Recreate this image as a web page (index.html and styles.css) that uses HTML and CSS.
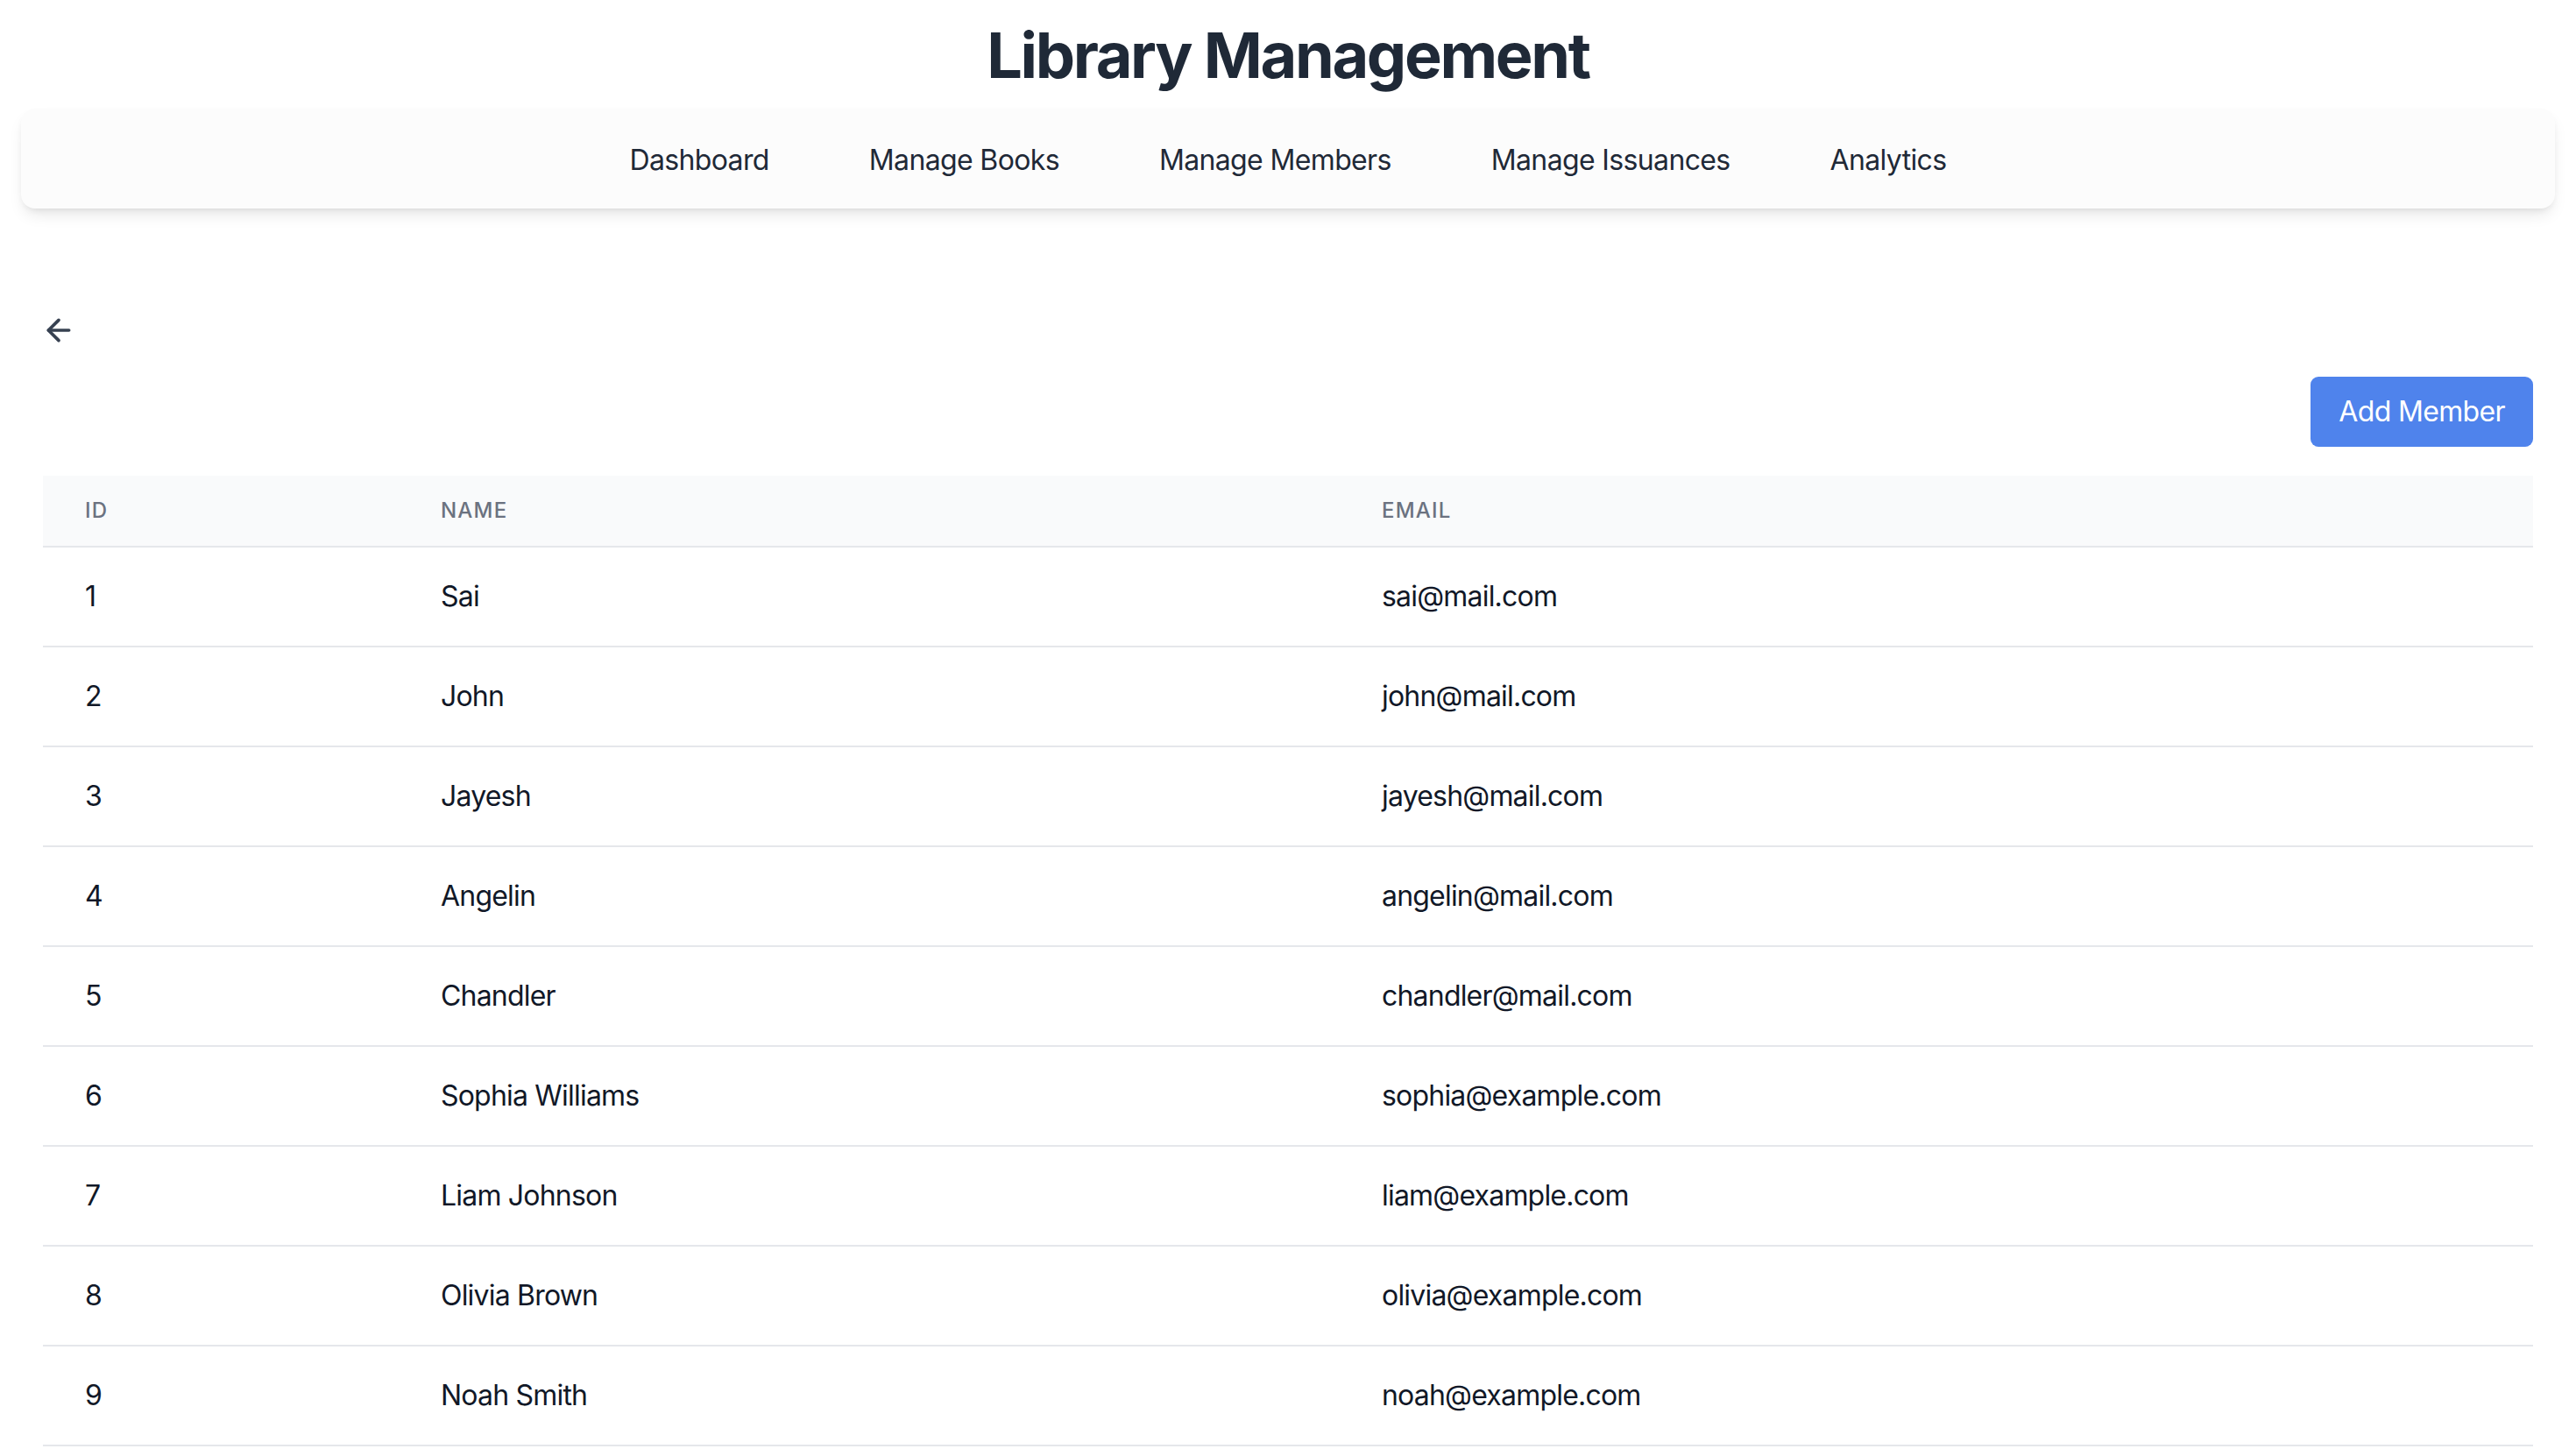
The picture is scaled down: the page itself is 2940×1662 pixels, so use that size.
FILE: index.html
```html
<!DOCTYPE html>
<html lang="en">
<head>
<meta charset="utf-8">
<title>Library Management</title>
<link rel="stylesheet" href="styles.css">
</head>
<body>
<header class="site-header">
  <h1 class="title">Library Management</h1>
  <nav class="nav">
    <a class="nav-link" href="#">Dashboard</a>
    <a class="nav-link" href="#">Manage Books</a>
    <a class="nav-link" href="#">Manage Members</a>
    <a class="nav-link" href="#">Manage Issuances</a>
    <a class="nav-link" href="#">Analytics</a>
  </nav>
</header>
<main class="content">
  <button class="back-btn" type="button" aria-label="Back">
    <svg class="back-icon" viewBox="0 0 24 24" fill="none" stroke="currentColor" stroke-width="2.2" stroke-linecap="round" stroke-linejoin="round">
      <path d="M19 12H5"/>
      <path d="M12 19l-7-7 7-7"/>
    </svg>
  </button>
  <div class="toolbar">
    <button class="add-btn" type="button">Add Member</button>
  </div>
  <table class="members">
    <colgroup>
      <col class="col-id">
      <col class="col-name">
      <col class="col-email">
    </colgroup>
    <thead>
      <tr><th>ID</th><th>Name</th><th>Email</th></tr>
    </thead>
    <tbody>
      <tr><td>1</td><td>Sai</td><td>sai@mail.com</td></tr>
      <tr><td>2</td><td>John</td><td>john@mail.com</td></tr>
      <tr><td>3</td><td>Jayesh</td><td>jayesh@mail.com</td></tr>
      <tr><td>4</td><td>Angelin</td><td>angelin@mail.com</td></tr>
      <tr><td>5</td><td>Chandler</td><td>chandler@mail.com</td></tr>
      <tr><td>6</td><td>Sophia Williams</td><td>sophia@example.com</td></tr>
      <tr><td>7</td><td>Liam Johnson</td><td>liam@example.com</td></tr>
      <tr><td>8</td><td>Olivia Brown</td><td>olivia@example.com</td></tr>
      <tr><td>9</td><td>Noah Smith</td><td>noah@example.com</td></tr>
    </tbody>
  </table>
</main>
</body>
</html>
```
FILE: styles.css
```css
* { box-sizing: border-box; }

html, body {
  margin: 0;
  padding: 0;
  background: #ffffff;
}

body {
  font-family: Inter, "Noto Sans", "Liberation Sans", sans-serif;
  color: #111827;
}

.site-header {
  padding-top: 23px;
}

.title {
  margin: 0;
  text-align: center;
  font-size: 72px;
  line-height: 80px;
  font-weight: 700;
  letter-spacing: -0.033em;
  color: #1f2937;
}

.nav {
  margin: 21px 24px 0;
  height: 114px;
  padding-top: 3px;
  background: #fcfcfc;
  border-radius: 16px;
  box-shadow: 0 10px 18px -4px rgba(0, 0, 0, 0.10), 0 4px 8px -4px rgba(0, 0, 0, 0.10);
  display: flex;
  justify-content: center;
  align-items: center;
  gap: 114px;
}

.nav-link {
  font-size: 32px;
  line-height: 48px;
  letter-spacing: -0.02em;
  color: #1f2937;
  text-decoration: none;
}

.content {
  padding: 0 49px;
}

.back-btn {
  display: block;
  margin: 119px 0 0 -2px;
  padding: 0;
  border: none;
  background: none;
  color: #374151;
  width: 40px;
  height: 40px;
  cursor: pointer;
}

.back-icon {
  display: block;
  width: 40px;
  height: 40px;
}

.toolbar {
  display: flex;
  justify-content: flex-end;
  margin-top: 33px;
}

.add-btn {
  font-family: inherit;
  font-size: 32px;
  line-height: 48px;
  letter-spacing: -0.02em;
  color: #ffffff;
  background: #4f83ec;
  border: none;
  border-radius: 9px;
  padding: 16px 32px;
  cursor: pointer;
}

.members {
  margin-top: 33px;
  width: 100%;
  border-collapse: collapse;
  table-layout: fixed;
}

.col-id { width: 406px; }
.col-name { width: 1074px; }

.members th {
  background: #f9fafb;
  text-align: left;
  padding: 24px 48px;
  font-size: 24px;
  line-height: 32px;
  font-weight: 500;
  letter-spacing: 0.05em;
  text-transform: uppercase;
  color: #6b7280;
  border-bottom: 2px solid #e5e7eb;
}

.members td {
  padding: 32px 48px;
  font-size: 32px;
  line-height: 48px;
  letter-spacing: -0.025em;
  color: #111827;
  border-bottom: 2px solid #e5e7eb;
}
```
